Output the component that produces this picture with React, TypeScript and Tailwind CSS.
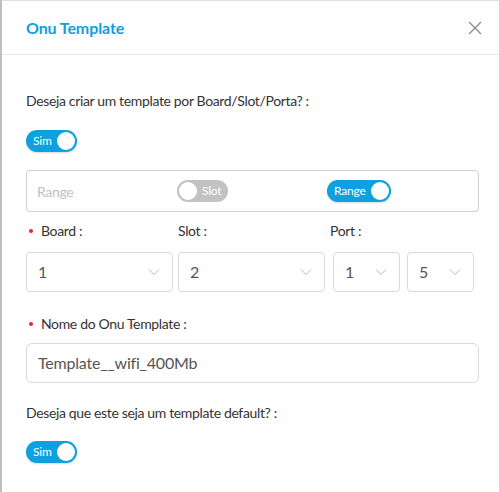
import React from "react";

const Chevron = () => (
  <svg width="12" height="8" viewBox="0 0 12 8" fill="none" stroke="#b8b8b8" strokeWidth="1">
    <path d="M1 1.5 L6 6.5 L11 1.5" />
  </svg>
);

const Toggle = ({ label, on }: { label: string; on: boolean }) =>
  on ? (
    <div className="flex items-center h-[22px] rounded-full bg-[#0ea0df] pl-[7px] pr-[2px] gap-[5px] shadow-[0_1px_2px_rgba(0,0,0,0.15)]">
      <span className="text-[12px] text-white leading-none tracking-[-0.2px]">{label}</span>
      <span className="w-[18px] h-[18px] rounded-full bg-white" />
    </div>
  ) : (
    <div className="flex items-center h-[22px] rounded-full bg-[#c2c2c2] pl-[2px] pr-[7px] gap-[5px]">
      <span className="w-[18px] h-[18px] rounded-full bg-white" />
      <span className="text-[12px] text-white leading-none tracking-[-0.2px]">{label}</span>
    </div>
  );

const Select = ({ value, w }: { value: string; w: string }) => (
  <div className={`${w} h-[40px] border border-[#d9d9d9] rounded-[4px] flex items-center justify-between pl-[11px] pr-[12px]`}>
    <span className="text-[16px] text-[#555]">{value}</span>
    <Chevron />
  </div>
);

const Dot = () => <span className="w-[4px] h-[4px] rounded-full bg-[#f5222d] ml-[3px] mr-[8px]" />;

export default function App() {
  return (
    <div className="w-[499px] h-[492px] bg-white flex tracking-[-0.35px]" style={{ fontFamily: "Lato, 'Noto Sans', sans-serif" }}>
      <div className="w-[2px] bg-[#bdbdbd] shrink-0" />
      <div className="flex-1 flex flex-col">
        <div className="h-[55px] border-b border-[#e8e8e8] flex items-center justify-between pl-[24px] pr-[17px] border-t border-t-[#e0e0e0]">
          <span className="text-[16px] font-bold text-[#0ea0df] tracking-[-0.1px]">Onu Template</span>
          <svg width="14" height="14" viewBox="0 0 14 14" stroke="#8a8a8a" strokeWidth="1.3">
            <path d="M1 1 L13 13 M13 1 L1 13" />
          </svg>
        </div>
        <div className="pl-[24px] pr-[20px] flex flex-col">
          <div className="mt-[36px] text-[14px] text-[#333] leading-[20px]">Deseja criar um template por Board/Slot/Porta? :</div>
          <div className="mt-[19px] flex">
            <Toggle label="Sim" on />
          </div>
          <div className="mt-[18px] h-[42px] border border-[#d0d0d0] rounded-[4px] flex items-center pl-[10px]">
            <span className="w-[140px] text-[14px] text-[#bfbfbf]">Range</span>
            <div className="w-[150px] flex">
              <Toggle label="Slot" on={false} />
            </div>
            <Toggle label="Range" on />
          </div>
          <div className="mt-[9px] flex text-[14px] text-[#333] leading-[20px]">
            <div className="w-[152px] flex items-center">
              <Dot />
              <span>Board :</span>
            </div>
            <div className="w-[152px]">Slot :</div>
            <div>Port :</div>
          </div>
          <div className="mt-[11px] flex">
            <Select value="1" w="w-[147px]" />
            <div className="w-[5px]" />
            <Select value="2" w="w-[147px]" />
            <div className="w-[8px]" />
            <Select value="1" w="w-[67px]" />
            <div className="w-[7px]" />
            <Select value="5" w="w-[67px]" />
          </div>
          <div className="mt-[22px] flex items-center text-[14px] text-[#333] leading-[20px]">
            <Dot />
            <span>Nome do Onu Template :</span>
          </div>
          <div className="mt-[9px] h-[40px] border border-[#d9d9d9] rounded-[6px] flex items-center pl-[11px]">
            <span className="text-[16px] text-[#555] tracking-[-0.2px]">Template__wifi_400Mb</span>
          </div>
          <div className="mt-[20px] text-[14px] text-[#333] leading-[20px]">Deseja que este seja um template default? :</div>
          <div className="mt-[18px] flex">
            <Toggle label="Sim" on />
          </div>
        </div>
      </div>
    </div>
  );
}
